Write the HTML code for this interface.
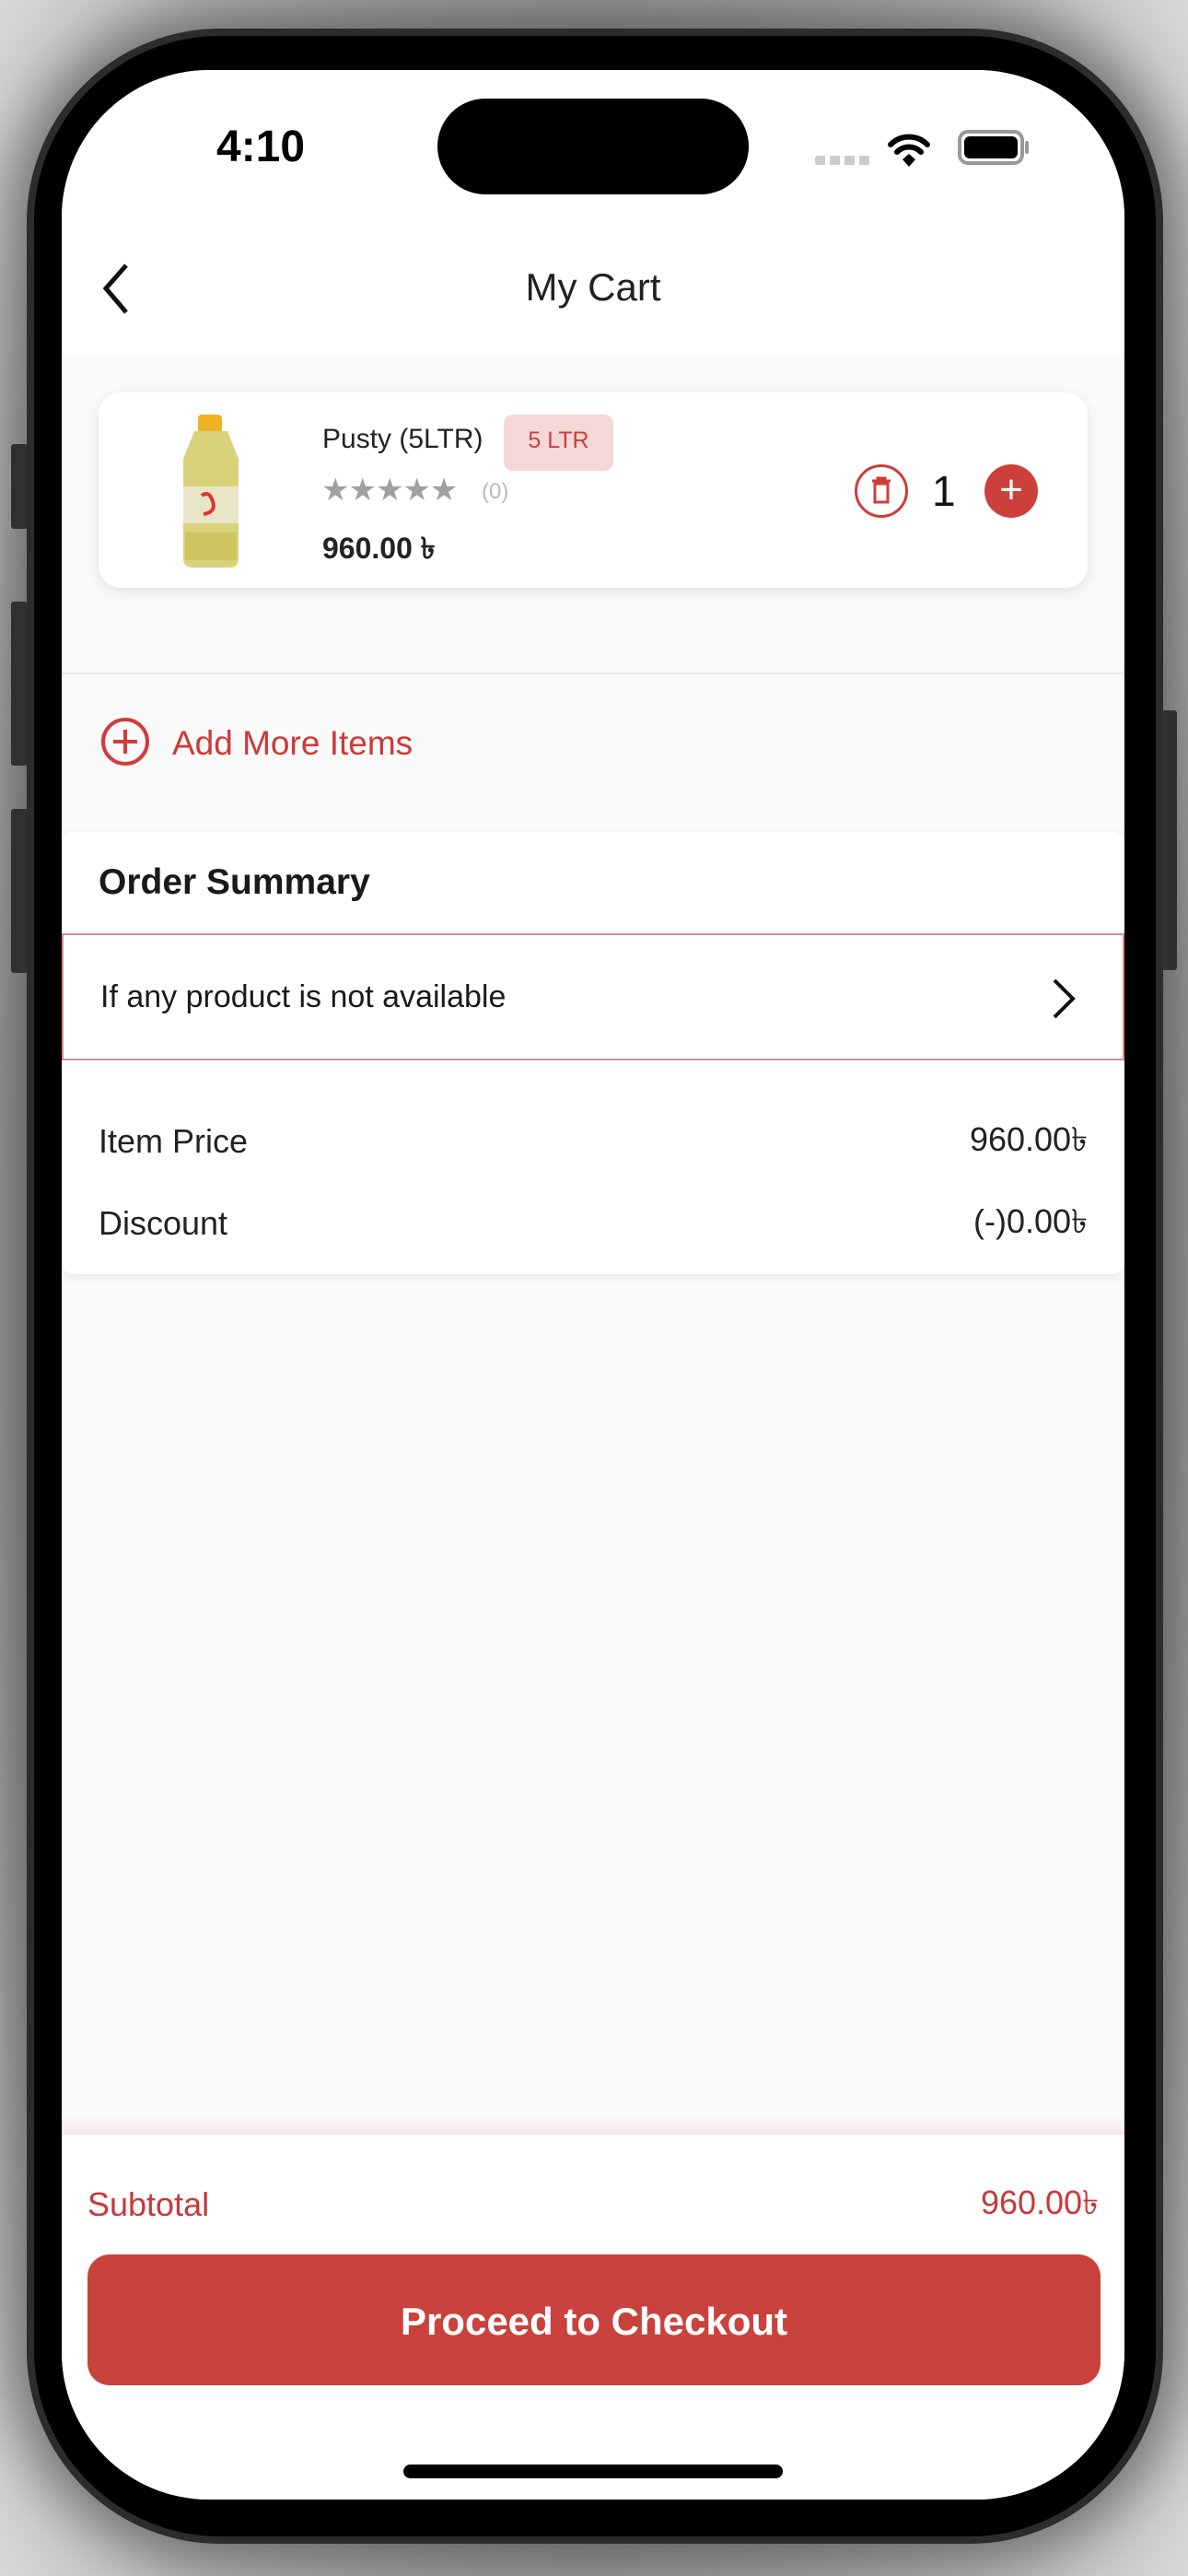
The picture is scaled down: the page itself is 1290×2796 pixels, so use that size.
<!DOCTYPE html>
<html><head><meta charset="utf-8"><style>
*{margin:0;padding:0;box-sizing:border-box}
html,body{width:1290px;height:2796px;overflow:hidden}
body{background:radial-gradient(ellipse at center,#9a9a9a 0%,#8a8a8a 60%,#d8d8d8 100%);font-family:"Liberation Sans",sans-serif;position:relative}
.a{position:absolute}
.frame{left:29px;top:31px;width:1234px;height:2730px;border-radius:210px;background:#000;border:8px solid #2c2c2c;box-shadow:0 0 60px 20px rgba(60,60,60,.6)}
.btn{background:#2a2a2a;border-radius:3px}
.screen{left:67px;top:76px;width:1154px;height:2637px;border-radius:160px;background:#fafafa;overflow:hidden}
.t{position:absolute;white-space:nowrap}
.v{line-height:41px}
</style></head><body>
<div class="a btn" style="left:12px;top:482px;width:18px;height:92px"></div>
<div class="a btn" style="left:12px;top:653px;width:18px;height:178px"></div>
<div class="a btn" style="left:12px;top:878px;width:18px;height:178px"></div>
<div class="a btn" style="left:1262px;top:771px;width:16px;height:282px"></div>
<div class="a frame"></div>
<div class="a screen">
  <div class="a" style="left:0;top:0;width:1154px;height:308px;background:#fff"></div>
  <div class="t" style="left:168px;top:56px;font-size:48px;font-weight:600;color:#000">4:10</div>
  <div class="a" style="left:408px;top:31px;width:338px;height:104px;border-radius:52px;background:#000"></div>
  <div class="a" style="left:818px;top:93px;width:60px;height:10px;background:repeating-linear-gradient(90deg,#ccc 0 11px,transparent 11px 16px);border-radius:3px"></div>
  <svg class="a" style="left:896px;top:67px" width="48" height="42" viewBox="0 0 48 42"><path d="M4 14a28 28 0 0 1 40 0" stroke="#000" stroke-width="6" fill="none" stroke-linecap="round"/><path d="M11 22a18 18 0 0 1 26 0" stroke="#000" stroke-width="6" fill="none" stroke-linecap="round"/><path d="M17 30l7-6 7 6-7 8z" fill="#000"/></svg>
  <div class="a" style="left:973px;top:65px;width:72px;height:38px;border:4px solid #999;border-radius:11px"><div style="margin:3px;height:24px;background:#000;border-radius:6px"></div></div>
  <div class="a" style="left:1046px;top:77px;width:4px;height:14px;background:#999;border-radius:2px"></div>
  <svg class="a" style="left:40px;top:208px" width="40" height="60" viewBox="0 0 40 60"><path d="M30 4L8 29l22 26" stroke="#111" stroke-width="5" fill="none"/></svg>
  <div class="t" style="left:0;width:1154px;text-align:center;top:212px;font-size:42px;color:#222">My Cart</div>

  <div class="a" style="left:40px;top:350px;width:1074px;height:212px;background:#fff;border-radius:24px;box-shadow:0 4px 14px rgba(0,0,0,.1)"></div>
  <svg class="a" style="left:122px;top:372px" width="80" height="170" viewBox="0 0 80 170"><rect x="26" y="2" width="26" height="20" rx="4" fill="#f0b323"/><path d="M22 20h36l12 30v108q0 10-10 10H20q-10 0-10-10V50z" fill="#d9d27a"/><rect x="10" y="80" width="60" height="40" fill="#e9e6c8"/><path d="M30 90q8-6 12 6t-10 14" stroke="#d33" stroke-width="4" fill="none"/><rect x="12" y="130" width="56" height="30" fill="#cfc560"/></svg>
  <div class="t" style="left:283px;top:384px;font-size:30px;color:#222">Pusty (5LTR)</div>
  <div class="a" style="left:480px;top:374px;width:119px;height:61px;border-radius:10px;background:#f5d7d8"></div>
  <div class="t" style="left:480px;width:119px;text-align:center;top:388px;font-size:25px;color:#c8403c">5 LTR</div>
  <div class="t" style="left:282px;top:436px;font-size:34px;color:#a0a0a0;letter-spacing:-1px">★★★★★</div>
  <div class="t" style="left:456px;top:444px;font-size:24px;color:#bbb">(0)</div>
  <div class="t" style="left:283px;top:494px;font-size:32px;font-weight:bold;color:#222">960.00 ৳</div>
  <div class="a" style="left:861px;top:428px;width:58px;height:58px;border:3px solid #d03c3a;border-radius:50%"></div>
  <svg class="a" style="left:876px;top:441px" width="28" height="32" viewBox="0 0 28 32"><path d="M4 5h20M10 5V2h8v3M7 8v20h14V8z" stroke="#d03c3a" stroke-width="3" fill="none"/></svg>
  <div class="t" style="left:945px;top:430px;font-size:46px;color:#111">1</div>
  <div class="a" style="left:1002px;top:428px;width:58px;height:58px;background:#cd3f3b;border-radius:50%"></div>
  <div class="t" style="left:1002px;width:58px;text-align:center;top:431px;font-size:44px;color:#fff">+</div>

  <div class="a" style="left:0;top:654px;width:1154px;height:2px;background:#e6e6e6"></div>
  <svg class="a" style="left:42px;top:702px" width="54" height="54" viewBox="0 0 54 54"><circle cx="27" cy="27" r="24" stroke="#d03c3a" stroke-width="4" fill="none"/><path d="M27 14v26M14 27h26" stroke="#d03c3a" stroke-width="4"/></svg>
  <div class="t" style="left:120px;top:710px;font-size:37px;color:#cd3935">Add More Items</div>

  <div class="a" style="left:0;top:827px;width:1154px;height:480px;background:#fff;border-radius:12px;box-shadow:0 3px 12px rgba(0,0,0,.08)"></div>
  <div class="t" style="left:40px;top:860px;font-size:39px;font-weight:bold;color:#1a1a1a">Order Summary</div>
  <div class="a" style="left:0;top:937px;width:1154px;height:138px;border:2px solid #e08a8a"></div>
  <div class="t" style="left:42px;top:987px;font-size:34px;color:#1a1a1a">If any product is not available</div>
  <svg class="a" style="left:1073px;top:984px" width="30" height="48" viewBox="0 0 30 48"><path d="M5 4l20 20L5 44" stroke="#111" stroke-width="4" fill="none"/></svg>
  <div class="t v" style="left:40px;top:1142px;font-size:36px;color:#222">Item Price</div>
  <div class="t v" style="right:40px;top:1140px;font-size:36px;color:#222">960.00৳</div>
  <div class="t v" style="left:40px;top:1231px;font-size:36px;color:#222">Discount</div>
  <div class="t v" style="right:40px;top:1229px;font-size:36px;color:#222">(-)0.00৳</div>

  <div class="a" style="left:0;top:2220px;width:1154px;height:22px;background:linear-gradient(#fafafa,#f6e6e6)"></div>
  <div class="a" style="left:0;top:2241px;width:1154px;height:400px;background:#fff"></div>
  <div class="t v" style="left:28px;top:2296px;font-size:36px;color:#c8383a">Subtotal</div>
  <div class="t v" style="right:28px;top:2294px;font-size:36px;color:#c8383a">960.00৳</div>
  <div class="a" style="left:28px;top:2371px;width:1100px;height:142px;background:#c9423d;border-radius:24px"></div>
  <div class="t" style="left:28px;width:1100px;text-align:center;top:2420px;font-size:42px;font-weight:bold;color:#fff">Proceed to Checkout</div>
  <div class="a" style="left:371px;top:2599px;width:412px;height:15px;background:#000;border-radius:8px"></div>
</div>
</body></html>
